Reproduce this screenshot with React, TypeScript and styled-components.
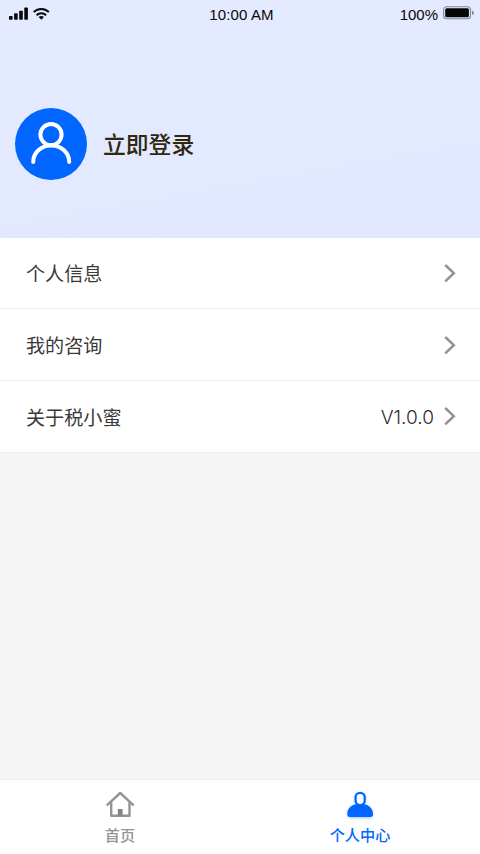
import React from 'react';
import styled, { createGlobalStyle } from 'styled-components';

const GlobalStyle = createGlobalStyle`
  * { box-sizing: border-box; }
  body {
    margin: 0;
    background: #f5f5f5;
    font-family: "Liberation Sans", "Noto Sans CJK SC", sans-serif;
  }
`;

const Screen = styled.div`
  display: flex;
  flex-direction: column;
  width: 480px;
  height: 854px;
  overflow: hidden;
  background: #f5f5f5;
`;

const Header = styled.header`
  height: 237.6px;
  flex: none;
  background: linear-gradient(170deg, #e4eaff 0%, #e3e9ff 65%, #e1e7ff 100%);
`;

const StatusBar = styled.div`
  display: grid;
  grid-template-columns: 1fr auto 1fr;
  align-items: center;
  height: 28px;
  padding: 0 6px 0 9px;
  color: #080808;
  font-size: 15px;
  line-height: 28px;
`;

const Signals = styled.div`
  display: flex;
  align-items: center;
  gap: 5px;
  height: 26px;
  padding-bottom: 2px;
`;

const Clock = styled.span`
  padding-top: 1px;
  letter-spacing: 0.14px;
`;

const Power = styled.div`
  display: flex;
  align-items: center;
  justify-content: flex-end;
  gap: 5px;

  span {
    padding-top: 1px;
  }

  svg {
    margin-bottom: 3px;
  }
`;

const Profile = styled.div`
  display: flex;
  align-items: center;
  gap: 16px;
  margin-top: 80px;
  padding-left: 15px;
`;

const Avatar = styled.div`
  width: 72px;
  height: 72px;
  border-radius: 50%;
  background: #0066ff;
`;

const LoginText = styled.span`
  color: #30270f;
  font-family: "Noto Sans CJK SC", sans-serif;
  font-size: 22.8px;
  font-weight: 500;
  line-height: 34px;
`;

const Menu = styled.main`
  flex: 1;
`;

const MenuRow = styled.div`
  display: flex;
  align-items: center;
  height: 71.75px;
  padding: 0 24px 0 26px;
  background: #fff;
  border-bottom: 1px solid #f0f0f0;
`;

const RowLabel = styled.span`
  flex: 1;
  padding-top: 1px;
  color: #3a3a3a;
  font-family: "Noto Sans CJK SC", sans-serif;
  font-size: 19.1px;
  line-height: 28px;
`;

const RowValue = styled.span`
  margin-right: 9px;
  padding-top: 1px;
  color: #2e2e2e;
  font-family: Inter, sans-serif;
  font-size: 19.1px;
  font-weight: 350;
  line-height: 28px;
`;

const TabBar = styled.nav`
  display: flex;
  flex: none;
  height: 75px;
  background: #fff;
  border-top: 1px solid #eeeeee;
`;

const Tab = styled.div<{ $active?: boolean }>`
  display: flex;
  flex: 1;
  flex-direction: column;
  align-items: center;
  padding-top: 10px;
  color: ${({ $active }) => ($active ? '#0066ff' : '#949494')};

  svg {
    overflow: visible;
    filter: ${({ $active }) => ($active ? 'drop-shadow(0 1px 1.5px rgba(0, 102, 255, 0.35))' : 'none')};
  }
`;

const TabLabel = styled.span`
  margin-top: 4px;
  font-family: "Noto Sans CJK SC", sans-serif;
  font-size: 15.2px;
  font-weight: 500;
  line-height: 24px;
`;

const SignalIcon = () => (
  <svg width="19" height="13" viewBox="0 0 19 13" fill="#080808">
    <rect x="0" y="9" width="3.6" height="3.7" rx=".7" />
    <rect x="5.1" y="6.3" width="3.6" height="6.4" rx=".7" />
    <rect x="10.2" y="3.7" width="3.6" height="9" rx=".7" />
    <rect x="15.3" y="0.5" width="3.6" height="12.2" rx=".7" />
  </svg>
);

const WifiIcon = () => (
  <svg width="17" height="13" viewBox="0 0 17 13" fill="none" stroke="#080808" strokeWidth="2">
    <path d="M.7 5Q4 1.9 8.3 1.9T15.9 5" />
    <path d="M3.5 8.2q2-1.9 4.8-1.9t4.8 1.9" />
    <path d="M5.6 10.1q2.7-2 5.4 0L8.3 12.7Z" fill="#080808" stroke="none" />
  </svg>
);

const BatteryIcon = () => (
  <svg width="31" height="14" viewBox="0 0 31 14">
    <rect x=".6" y=".7" width="26.9" height="12.1" rx="3" fill="none" stroke="#85889a" strokeWidth="1.1" />
    <rect x="2.2" y="2.3" width="23.7" height="8.9" rx="1.5" fill="#050505" />
    <path d="M29 4.5q2 .7 2 2.3t-2 2.3Z" fill="#85889a" />
  </svg>
);

const AvatarIcon = () => (
  <svg width="72" height="72" viewBox="0 0 72 72" fill="none" stroke="#fff" strokeWidth="4" strokeLinecap="round">
    <circle cx="36" cy="26.6" r="10.6" />
    <path d="M18.2 54C18.2 45 26 37.4 36.2 37.4S54.2 45 54.2 54" />
  </svg>
);

const Chevron = () => (
  <svg width="13" height="20" viewBox="0 0 13 20" fill="none" stroke="#929292" strokeWidth="2.5">
    <path d="m2.2 2 8.6 8.2-8.6 8.2" />
  </svg>
);

const HomeIcon = () => (
  <svg width="28" height="28" viewBox="0 0 28 28" fill="none" stroke="#949494" strokeWidth="2.4" strokeLinejoin="round" strokeLinecap="round">
    <path d="M1.3 14.8 14.2 3l12.9 11.8M5.2 12.2v13.5h18.3V12.2" />
    <path d="M11.8 19h4.8v6.7h-4.8Z" fill="#858585" stroke="none" />
  </svg>
);

const PersonIcon = () => (
  <svg width="28" height="28" viewBox="0 0 28 28">
    <path d="M1.3 24.3C1.3 17.5 6.6 13.8 14.2 13.8S27 17.5 27 24.3c0 1.8-1 2.7-2.6 2.7H3.9c-1.6 0-2.6-.9-2.6-2.7Z" fill="#0066ff" />
    <rect x="9.6" y="2.8" width="9.1" height="12.2" rx="4.55" fill="#fff" stroke="#0066ff" strokeWidth="2.2" />
  </svg>
);

const rows = [
  { label: '个人信息' },
  { label: '我的咨询' },
  { label: '关于税小蜜', value: 'V1.0.0' },
];

export default function App() {
  return (
    <>
      <GlobalStyle />
      <Screen>
        <Header>
          <StatusBar>
            <Signals>
              <SignalIcon />
              <WifiIcon />
            </Signals>
            <Clock>10:00 AM</Clock>
            <Power>
              <span>100%</span>
              <BatteryIcon />
            </Power>
          </StatusBar>
          <Profile>
            <Avatar>
              <AvatarIcon />
            </Avatar>
            <LoginText>立即登录</LoginText>
          </Profile>
        </Header>
        <Menu>
          {rows.map(({ label, value }) => (
            <MenuRow key={label}>
              <RowLabel>{label}</RowLabel>
              {value && <RowValue>{value}</RowValue>}
              <Chevron />
            </MenuRow>
          ))}
        </Menu>
        <TabBar>
          <Tab>
            <HomeIcon />
            <TabLabel>首页</TabLabel>
          </Tab>
          <Tab $active>
            <PersonIcon />
            <TabLabel>个人中心</TabLabel>
          </Tab>
        </TabBar>
      </Screen>
    </>
  );
}
